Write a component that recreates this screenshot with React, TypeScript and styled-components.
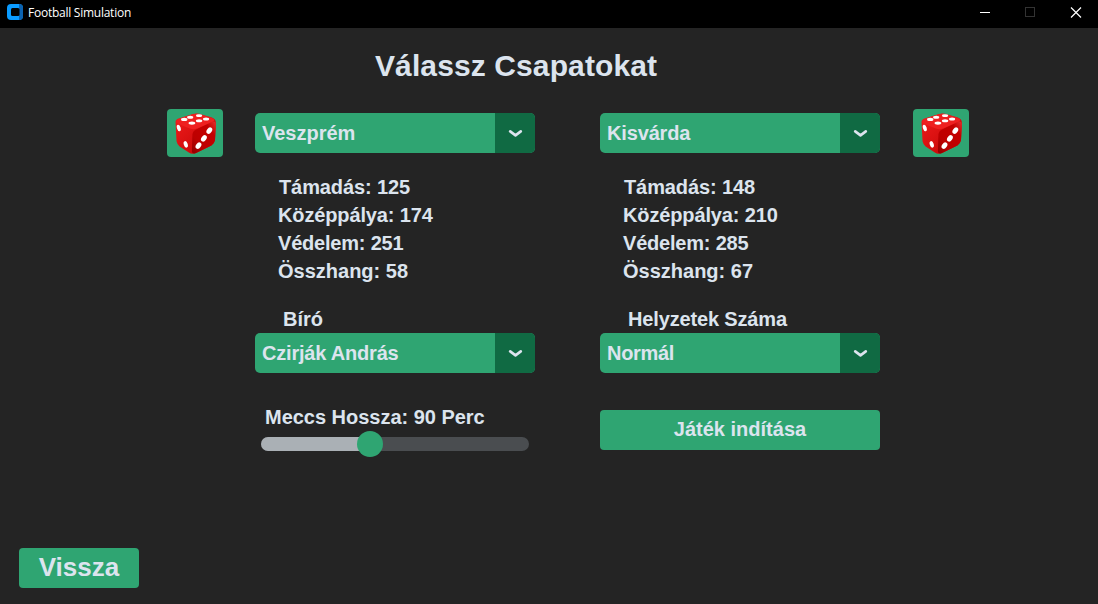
import React from "react";
import styled, { createGlobalStyle } from "styled-components";

const GlobalStyle = createGlobalStyle`
  * { box-sizing: border-box; }
  html, body { margin: 0; padding: 0; background: #242424; }
`;

const Window = styled.div`
  width: 1098px;
  height: 604px;
  display: flex;
  flex-direction: column;
  overflow: hidden;
  background: #242424;
  color: #dce4ee;
  font-family: "Liberation Sans", Arial, sans-serif;
  font-weight: 700;
  font-size: 20px;
`;

const TitleBar = styled.header`
  height: 28px;
  flex: none;
  display: flex;
  align-items: flex-start;
  padding: 4px 0 0 7px;
  background: #000;
  color: #fff;
`;

const WindowTitle = styled.span`
  flex: 1;
  padding-left: 5px;
  font: 400 12px/18px "Open Sans", "Noto Sans", sans-serif;
  letter-spacing: -0.25px;
`;

const WindowControls = styled.svg`
  display: block;
  flex: none;
`;

const Content = styled.main`
  flex: 1;
  display: flex;
  flex-direction: column;
  padding: 19px 0 16px 19px;
`;

const Heading = styled.h1`
  margin: 0 0 24px 356px;
  font-size: 30px;
  letter-spacing: 0.11px;
  line-height: 38px;
  white-space: nowrap;
`;

const Columns = styled.div`
  display: flex;
  align-items: flex-start;
  padding-left: 148px;
`;

const Column = styled.section<{ $before: number }>`
  width: 280px;
  margin-left: ${(p) => p.$before}px;
  padding-top: 4px;
  display: flex;
  flex-direction: column;
`;

const DiceButton = styled.button<{ $before?: number }>`
  width: 56px;
  height: 48px;
  margin: 0 0 0 ${(p) => p.$before ?? 0}px;
  padding: 0;
  border: 0;
  border-radius: 4px;
  background: #2fa572;
  display: flex;
  align-items: center;
  justify-content: center;
`;

const Select = styled.button`
  width: 280px;
  height: 40px;
  padding: 0;
  border: 0;
  border-radius: 5px;
  overflow: hidden;
  display: flex;
  background: #2fa572;
  color: #dce4ee;
  font: inherit;
  text-align: left;
`;

const SelectValue = styled.span<{ $spacing?: number }>`
  flex: 1;
  padding-left: 7px;
  line-height: 40px;
  letter-spacing: ${(p) => p.$spacing ?? 0}px;
`;

const SelectArrow = styled.span`
  width: 40px;
  height: 40px;
  display: flex;
  align-items: center;
  justify-content: center;
  background: #106a43;
`;

const Stats = styled.ul`
  list-style: none;
  margin: 20px 0;
  padding: 0 0 0 23px;
`;

const Stat = styled.li<{ $spacing?: number; $indent?: number }>`
  height: 28px;
  line-height: 28px;
  padding-left: ${(p) => p.$indent ?? 0}px;
  letter-spacing: ${(p) => p.$spacing ?? 0}px;
  white-space: nowrap;
`;

const Label = styled.div<{ $indent: number; $spacing?: number }>`
  height: 28px;
  line-height: 28px;
  padding-left: ${(p) => p.$indent}px;
  letter-spacing: ${(p) => p.$spacing ?? 0}px;
  white-space: nowrap;
`;

const SliderBlock = styled.div`
  margin-top: 30px;
`;

const Track = styled.div`
  height: 14px;
  width: 268px;
  margin: 6px 0 0 6px;
  border-radius: 7px;
  background: #4a4d50;
  display: flex;
  align-items: center;
`;

const Progress = styled.div`
  width: 109px;
  height: 14px;
  border-radius: 7px 0 0 7px;
  background: #aab0b5;
`;

const Thumb = styled.div`
  width: 26px;
  height: 26px;
  flex: none;
  margin-left: -13px;
  border-radius: 50%;
  background: #2fa572;
`;

const Button = styled.button<{ $width: number; $size: number; $spacing?: number }>`
  width: ${(p) => p.$width}px;
  height: 40px;
  padding: 0 0 2px;
  border: 0;
  border-radius: 4px;
  background: #2fa572;
  color: #dce4ee;
  font: inherit;
  font-size: ${(p) => p.$size}px;
  letter-spacing: ${(p) => p.$spacing ?? 0}px;
`;

const StartArea = styled.div`
  margin-top: 37px;
  display: flex;
`;

const Footer = styled.footer`
  margin-top: auto;
  display: flex;
`;

function AppIcon() {
  return (
    <svg width="16" height="16" viewBox="0 0 16 16">
      <rect width="16" height="16" rx="4" fill="#0a9bff" />
      <path d="M12 0a4 4 0 0 1 4 4v8a4 4 0 0 1-4 4z" fill="#0b62b0" />
      <rect x="4" y="4" width="8.5" height="8" rx="1.5" fill="#000" />
    </svg>
  );
}

function Arrow() {
  return (
    <svg width="16" height="10" viewBox="0 0 16 10">
      <path
        d="M3.200 3.400 8.500 7.300 13.800 3.400"
        fill="none"
        stroke="#dce4ee"
        strokeWidth="2.700"
        strokeLinecap="round"
        strokeLinejoin="round"
      />
    </svg>
  );
}

function Dice({ id }: { id: string }) {
  return (
    <svg width="41" height="41" viewBox="0.5 0 40 40.5" preserveAspectRatio="none">
      <defs>
        <linearGradient id={`${id}-left`} x1="0" y1="0" x2="1" y2="1">
          <stop offset="0" stopColor="#f01c1c" />
          <stop offset="1" stopColor="#c00404" />
        </linearGradient>
        <linearGradient id={`${id}-right`} x1="0" y1="1" x2="1" y2="0">
          <stop offset="0" stopColor="#8e0000" />
          <stop offset="0.3" stopColor="#bd0000" />
          <stop offset="0.75" stopColor="#c40000" />
          <stop offset="1" stopColor="#e43030" />
        </linearGradient>
      </defs>
      <path
        d="M1 9Q1 6.500 4 5.500L18 .9Q21 0 24 .7L36.500 4.500Q40.500 6 40.400 10L39.500 27Q39 30 36 32L21 39.500Q17 41.200 14 39L5 33Q2.500 31 2 28Z"
        fill={`url(#${id}-left)`}
      />
      <path
        d="M17.500 21Q18 17.500 21.500 16L37 8.500Q40.500 7.600 40.400 11L39.500 27Q39 30 36 32L21 39.500Q17.500 41 17 38Z"
        fill={`url(#${id}-right)`}
      />
      <path
        d="M1.600 9Q1.500 6.800 4 5.900L18 1.200Q21 .4 24 1.100L36.500 4.900Q41 6.500 37 8.600L22 15.400Q18.500 16.800 15 15.400L3 10.500Z"
        fill="#ee2020"
      />
      <g fill="#fff">
        <ellipse cx="15.300" cy="4.100" rx="3" ry="1.500" />
        <ellipse cx="24" cy="2.600" rx="3" ry="1.400" />
        <ellipse cx="9.500" cy="6.300" rx="3.100" ry="1.500" />
        <ellipse cx="24" cy="7.600" rx="3.100" ry="1.500" />
        <ellipse cx="30.800" cy="5.900" rx="3" ry="1.500" />
        <ellipse cx="17" cy="10" rx="3.300" ry="1.600" />
        <ellipse cx="4.200" cy="14.800" rx="1.800" ry="3.300" transform="rotate(-17 4.200 14.800)" />
        <ellipse cx="11" cy="31" rx="1.900" ry="3.300" transform="rotate(-18 11 31)" />
        <ellipse cx="34" cy="17.500" rx="2.400" ry="3.500" transform="rotate(35 34 17.500)" />
        <ellipse cx="28.700" cy="25" rx="2.400" ry="3.500" transform="rotate(35 28.700 25)" />
        <ellipse cx="23.400" cy="32.200" rx="2.400" ry="3.500" transform="rotate(35 23.400 32.200)" />
      </g>
    </svg>
  );
}

function Dropdown({ value, spacing }: { value: string; spacing?: number }) {
  return (
    <Select>
      <SelectValue $spacing={spacing}>{value}</SelectValue>
      <SelectArrow>
        <Arrow />
      </SelectArrow>
    </Select>
  );
}

export default function App() {
  return (
    <Window>
      <GlobalStyle />
      <TitleBar>
        <AppIcon />
        <WindowTitle>Football Simulation</WindowTitle>
        <WindowControls width="138" height="20" viewBox="0 0 138 20" fill="none">
          <path d="M20 8.500h10" stroke="#fff" />
          <rect x="65.500" y="3.500" width="9" height="9" stroke="#333" />
          <path d="m111 3.500 10 10M121 3.500l-10 10" stroke="#fff" strokeWidth="1.200" />
        </WindowControls>
      </TitleBar>
      <Content>
        <Heading>Válassz Csapatokat</Heading>
        <Columns>
          <DiceButton>
            <Dice id="home" />
          </DiceButton>
          <Column $before={32}>
            <Dropdown value="Veszprém" />
            <Stats>
              <Stat $indent={1} $spacing={-0.1}>Támadás: 125</Stat>
              <Stat $spacing={-0.13}>Középpálya: 174</Stat>
              <Stat $spacing={-0.2}>Védelem: 251</Stat>
              <Stat>Összhang: 58</Stat>
            </Stats>
            <Label $indent={28}>Bíró</Label>
            <Dropdown value="Czirják András" spacing={-0.2} />
            <SliderBlock>
              <Label $indent={10} $spacing={-0.02}>Meccs Hossza: 90 Perc</Label>
              <Track>
                <Progress />
                <Thumb />
              </Track>
            </SliderBlock>
          </Column>
          <Column $before={65}>
            <Dropdown value="Kisvárda" spacing={-0.15} />
            <Stats>
              <Stat $indent={1} $spacing={-0.1}>Támadás: 148</Stat>
              <Stat $spacing={-0.13}>Középpálya: 210</Stat>
              <Stat $spacing={-0.2}>Védelem: 285</Stat>
              <Stat>Összhang: 67</Stat>
            </Stats>
            <Label $indent={28} $spacing={-0.15}>Helyzetek Száma</Label>
            <Dropdown value="Normál" spacing={-0.3} />
            <StartArea>
              <Button $width={280} $size={20}>Játék indítása</Button>
            </StartArea>
          </Column>
          <DiceButton $before={33}>
            <Dice id="away" />
          </DiceButton>
        </Columns>
        <Footer>
          <Button $width={120} $size={26}>Vissza</Button>
        </Footer>
      </Content>
    </Window>
  );
}
